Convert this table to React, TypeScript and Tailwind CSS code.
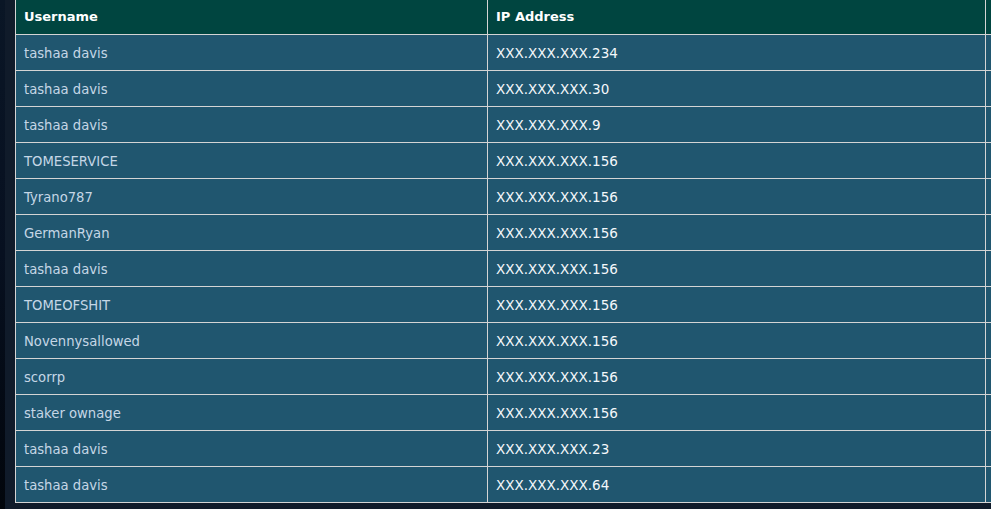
const rows: [string, string][] = [
  ["tashaa davis", "XXX.XXX.XXX.234"],
  ["tashaa davis", "XXX.XXX.XXX.30"],
  ["tashaa davis", "XXX.XXX.XXX.9"],
  ["TOMESERVICE", "XXX.XXX.XXX.156"],
  ["Tyrano787", "XXX.XXX.XXX.156"],
  ["GermanRyan", "XXX.XXX.XXX.156"],
  ["tashaa davis", "XXX.XXX.XXX.156"],
  ["TOMEOFSHIT", "XXX.XXX.XXX.156"],
  ["Novennysallowed", "XXX.XXX.XXX.156"],
  ["scorrp", "XXX.XXX.XXX.156"],
  ["staker ownage", "XXX.XXX.XXX.156"],
  ["tashaa davis", "XXX.XXX.XXX.23"],
  ["tashaa davis", "XXX.XXX.XXX.64"],
];

export default function App() {
  return (
    <div className="w-[991px] h-[509px] overflow-hidden bg-[#101b2a] flex font-['Verdana','DejaVu_Sans',sans-serif] text-[13px]">
      {/* textured page edge */}
      <div className="w-[5px] shrink-0 bg-gradient-to-b from-[#0a1626] via-[#071020] to-[#02060c]" />
      <div className="w-[10px] shrink-0" />
      <div className="flex-1 overflow-hidden">
        <table className="border-collapse w-[1200px] table-fixed">
          <colgroup>
            <col className="w-[472px]" />
            <col className="w-[498px]" />
            <col />
          </colgroup>
          <thead>
            <tr className="h-[34px] bg-[#004540] text-white font-bold">
              <th className="text-left pl-[8px] border-l border-r border-b border-[#d4d4d4]">Username</th>
              <th className="text-left pl-[8px] border-r border-b border-[#d4d4d4]">IP Address</th>
              <th className="border-b border-[#d4d4d4]" />
            </tr>
          </thead>
          <tbody>
            {rows.map(([name, ip], i) => (
              <tr key={i} className="h-[36px] bg-[#20566f]">
                <td className="pl-[8px] pt-[3px] text-[13.2px] text-[#c5d6e6] border border-[#d4d4d4]">{name}</td>
                <td className="pl-[8px] pt-[3px] text-[13.5px] text-[#f4f8fb] border border-[#d4d4d4]">{ip}</td>
                <td className="border border-[#d4d4d4]" />
              </tr>
            ))}
          </tbody>
        </table>
      </div>
    </div>
  );
}
